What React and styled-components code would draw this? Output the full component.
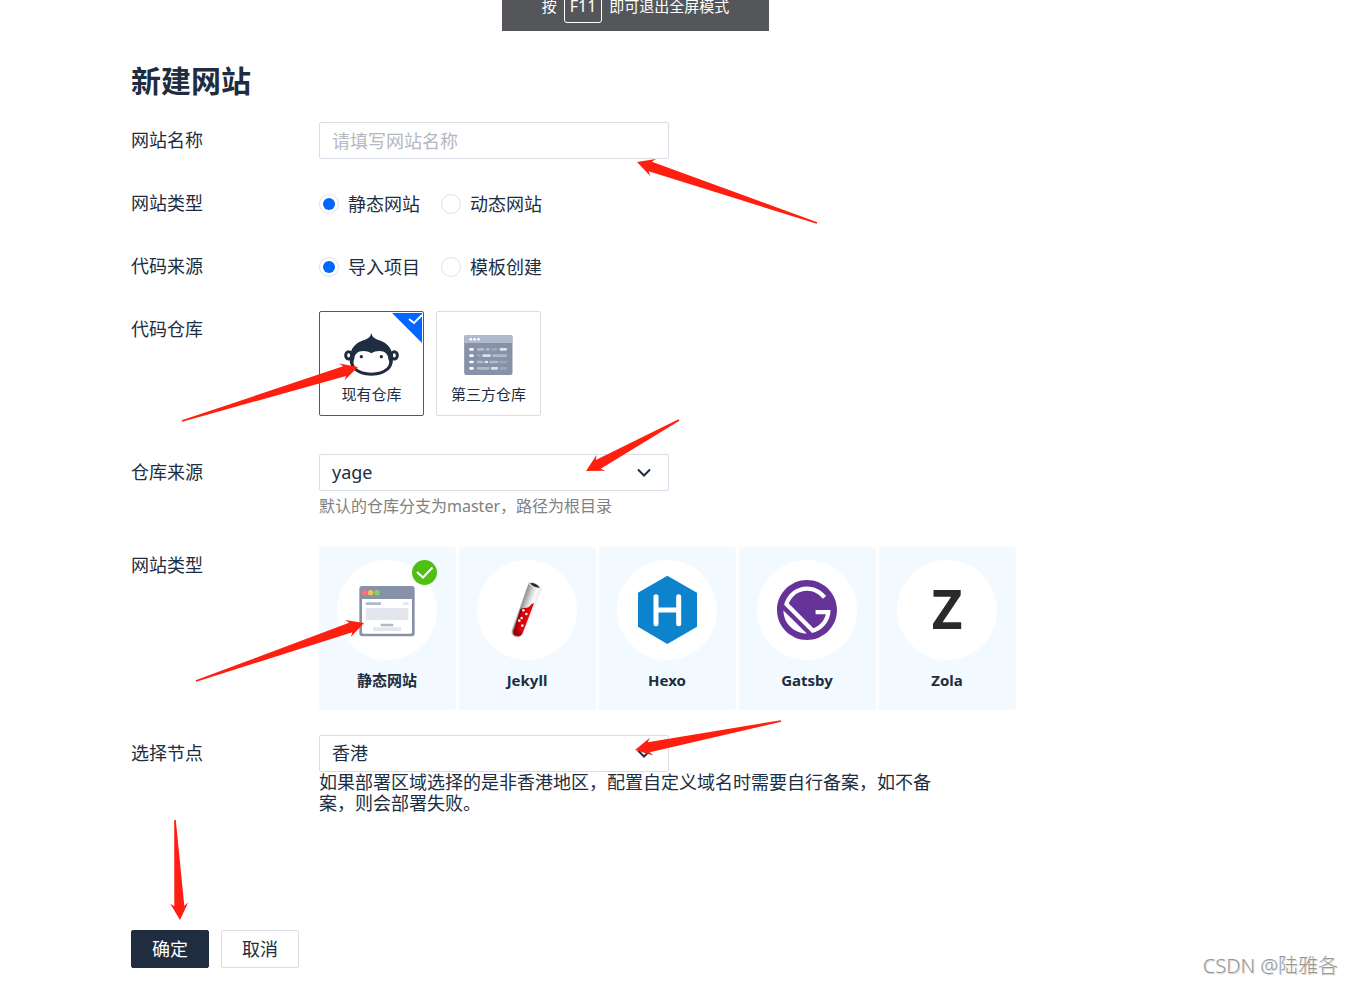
import React, { useState } from 'react';
import styled, { createGlobalStyle } from 'styled-components';
import { SiGatsby } from 'react-icons/si';

const ink = '#202d40';
const line = '#d8dde6';
const blue = '#0066ff';
const red = '#ff1f10';

const GlobalStyle = createGlobalStyle`
  * { box-sizing: border-box; }
  body {
    margin: 0;
    background: #fff;
    color: ${ink};
    font: 400 18px/21px "Noto Sans", "Noto Sans CJK SC", sans-serif;
  }
  button, input, select { font: inherit; color: inherit; }
`;

const Page = styled.main`
  position: relative;
  min-height: 100vh;
  padding: 60px 24px 16px 131px;
`;

const Toast = styled.div`
  position: absolute;
  top: 0;
  left: 502px;
  display: flex;
  justify-content: center;
  align-items: flex-end;
  gap: 7px;
  width: 267px;
  height: 31px;
  padding-bottom: 8px;
  overflow: hidden;
  background: #54565a;
  color: #fff;
  font-size: 15px;
  font-weight: 400;
  line-height: 34px;
`;

const Key = styled.kbd`
  height: 34px;
  padding: 0 5px;
  border: 1px solid #fff;
  border-radius: 3px;
  font: inherit;
  font-size: 16px;
  line-height: 32px;
`;

const Title = styled.h1`
  margin: 0 0 20px;
  font-size: 30px;
  font-weight: 700;
  line-height: 42px;
`;

const Form = styled.form`
  display: flex;
  flex-direction: column;
  gap: 25px;
`;

const Row = styled.div`
  display: grid;
  grid-template-columns: 188px minmax(0, 1fr);
  min-height: 38px;
`;

const RowLabel = styled.label`
  line-height: 36px;
`;

const Field = styled.div`
  position: relative;
  padding-bottom: ${(p) => p.$space || 0}px;
`;

const TextInput = styled.input`
  display: block;
  width: 100%;
  max-width: 350px;
  height: 37px;
  padding: 0 12px;
  border: 1px solid ${line};
  border-radius: 2px;
  outline: none;
  &::placeholder { color: #b3b8c1; opacity: 1; }
`;

const SelectBox = styled.div`
  position: relative;
  max-width: 350px;
  svg {
    position: absolute;
    top: 14px;
    right: 18px;
    pointer-events: none;
  }
`;

const SelectInput = styled.select`
  display: block;
  width: 100%;
  height: 37px;
  padding: 0 40px 0 12px;
  border: 1px solid ${line};
  border-radius: 2px;
  background: #fff;
  appearance: none;
  outline: none;
`;

const RadioGroup = styled.div`
  display: flex;
  align-items: center;
  gap: 21px;
  height: 38px;
`;

const RadioLabel = styled.label`
  display: flex;
  align-items: center;
  gap: 9px;
`;

const RadioInput = styled.input`
  appearance: none;
  display: grid;
  place-items: center;
  width: 20px;
  height: 20px;
  margin: 0;
  border: 1px solid #dde1e9;
  border-radius: 50%;
  &:checked::before {
    content: "";
    width: 12px;
    height: 12px;
    border-radius: 50%;
    background: ${blue};
  }
`;

const Cards = styled.div`
  display: flex;
  flex-wrap: wrap;
  gap: 12px;
`;

const RepoCard = styled.button`
  position: relative;
  display: flex;
  flex-direction: column;
  align-items: center;
  gap: 8px;
  width: 105px;
  height: 105px;
  padding: 21px 0 0;
  border: 1px solid ${(p) => (p.$active ? blue : line)};
  border-radius: 2px;
  background: #fff;
  font-size: 15px;
  line-height: 20px;
`;

const CardIcon = styled.span`
  display: grid;
  place-items: center;
  height: 43px;
`;

const Corner = styled.svg`
  position: absolute;
  top: 1px;
  right: 1px;
`;

const Hint = styled.p`
  margin: 0;
  color: #808080;
  font-size: 16px;
  line-height: 31px;
`;

const Note = styled.p`
  max-width: 620px;
  margin: 0;
`;

const Tiles = styled.div`
  display: flex;
  flex-wrap: wrap;
  gap: 3px;
`;

const Tile = styled.button`
  display: flex;
  flex-direction: column;
  align-items: center;
  gap: 10px;
  width: 137px;
  height: 163px;
  padding: 13px 1px 0 0;
  border: 0;
  border-radius: 2px;
  background: #f2faff;
  font-size: 15px;
  font-weight: 700;
  line-height: 20px;
`;

const Disc = styled.span`
  position: relative;
  display: grid;
  place-items: center;
  width: 100px;
  height: 100px;
  border-radius: 50%;
  background: #fff;
`;

const Badge = styled.svg`
  position: absolute;
  top: 0;
  right: 0;
`;

const Actions = styled.div`
  position: relative;
  display: flex;
  gap: 12px;
  margin-top: 91px;
`;

const Button = styled.button`
  width: 78px;
  height: 38px;
  padding: 0;
  border: 1px solid ${(p) => (p.$primary ? ink : line)};
  border-radius: 2px;
  background: ${(p) => (p.$primary ? ink : '#fff')};
  color: ${(p) => (p.$primary ? '#fff' : ink)};
`;

const Watermark = styled.div`
  position: absolute;
  right: 14px;
  bottom: 6px;
  color: #969696;
  font-size: 20px;
  font-weight: 300;
  line-height: 24px;
  text-shadow: -1px -1px 0 #fff, 1px 1px 1px #ccc;
`;

const ArrowSvg = styled.svg`
  position: absolute;
  z-index: 2;
  top: ${(p) => p.$y}px;
  left: ${(p) => p.$x}px;
  overflow: visible;
  pointer-events: none;
`;

/* Tapered pointer: its tip sits at (x, y), its tail at (x + dx, y + dy). */
function Arrow({ x, y, dx, dy }) {
  const length = Math.hypot(dx, dy);
  const angle = (Math.atan2(dy, dx) * 180) / Math.PI;
  return (
    <ArrowSvg $x={x} $y={y} width="1" height="1" aria-hidden="true">
      <polygon
        fill={red}
        transform={`rotate(${angle})`}
        points={`0,0 17,-9 14,-5 ${length},-0.8 ${length},0.8 14,5 17,9`}
      />
    </ArrowSvg>
  );
}

function Select({ id, options }) {
  return (
    <SelectBox>
      <SelectInput id={id}>
        {options.map((o) => <option key={o}>{o}</option>)}
      </SelectInput>
      <svg width="14" height="10" viewBox="0 0 14 10" fill="none" stroke={ink} strokeWidth="2">
        <path d="M1 1.5 7 7.5 13 1.5" />
      </svg>
    </SelectBox>
  );
}

function Radios({ name, label, options }) {
  return (
    <RadioGroup role="radiogroup" aria-label={label}>
      {options.map((o, i) => (
        <RadioLabel key={o}>
          <RadioInput type="radio" name={name} defaultChecked={i === 0} />
          {o}
        </RadioLabel>
      ))}
    </RadioGroup>
  );
}

const Monkey = () => (
  <svg width="55" height="43" viewBox="132 100 165 129">
    <g fill="#fff" stroke={ink} strokeWidth="9">
      <ellipse cx="146" cy="167" rx="9" ry="11" />
      <ellipse cx="283" cy="167" rx="9" ry="11" />
    </g>
    <path fill={ink} d="M214 100c2 11 9 17 24 22 20 7 32 19 37 34 6 19 6 38-6 52-12 13-32 20-55 20s-43-7-55-20c-12-14-12-33-6-52 5-15 17-27 37-34 15-5 22-11 24-22z" />
    <path fill="#fff" d="M214 161c7-5 15-7 24-7 17 0 27 10 27 24 5 9 3 19-6 27-10 9-26 14-45 14s-35-5-45-14c-9-8-11-18-6-27 0-14 10-24 27-24 9 0 17 2 24 7z" />
    <circle cx="184" cy="171" r="5" fill={ink} />
    <circle cx="244" cy="171" r="5" fill={ink} />
  </svg>
);

const CodeWindow = () => (
  <svg width="49" height="40" viewBox="493 105 146 120">
    <rect x="493" y="105" width="145" height="120" rx="6" fill="#8792a8" />
    <path d="M493 129v-18a6 6 0 0 1 6-6h133a6 6 0 0 1 6 6v18z" fill="#afbacd" />
    <g fill="#fff">
      <circle cx="513" cy="118" r="4" /><circle cx="524" cy="118" r="4" /><circle cx="536" cy="118" r="4" />
    </g>
    <g strokeWidth="8" strokeLinecap="round">
      <path stroke="#fff" d="M512 148h6M512 167h6M512 186h6M512 205h6" />
      <path stroke="#b0bacb" d="M535 148h15M562 148h4M581 167h37M535 186h12M572 186h20M535 205h31" />
      <path stroke="#9ca6b8" d="M577 148h12M535 167h4M602 186h16M602 205h16" />
      <path stroke="#dde2ea" d="M603 148h15M551 167h18M558 186h3M577 205h14" />
    </g>
  </svg>
);

const StaticSite = () => (
  <svg width="100" height="100" viewBox="0 0 300 300">
    <rect x="67" y="78" width="166" height="151" rx="9" fill="#8792a8" />
    <path fill="#fff" d="M75 117h150v100a4 4 0 0 1-4 4H79a4 4 0 0 1-4-4z" />
    <circle cx="83" cy="98" r="8" fill="#ff6f7c" />
    <circle cx="101" cy="98" r="8" fill="#f2c24d" />
    <circle cx="120" cy="98" r="8" fill="#83d654" />
    <path fill="#adbacd" d="M86 127h46v8H86zM131 191h38v8h-38z" />
    <path fill="#e3e7ed" d="M198 127h17v8h-17zM86 144h128v36H86zM108 202h84v11h-84z" />
  </svg>
);

const TestTube = () => (
  <svg width="100" height="100" viewBox="0 0 300 300">
    <defs>
      <linearGradient id="glass" gradientUnits="userSpaceOnUse" x1="134" y1="130" x2="172" y2="144">
        <stop offset="0" stopColor="#8f8f8f" />
        <stop offset="0.4" stopColor="#d2d2d2" />
        <stop offset="0.7" stopColor="#fafafa" />
        <stop offset="1" stopColor="#ececec" />
      </linearGradient>
      <linearGradient id="liquid" gradientUnits="userSpaceOnUse" x1="124" y1="170" x2="156" y2="182">
        <stop offset="0" stopColor="#a00008" />
        <stop offset="0.45" stopColor="#d8000c" />
        <stop offset="1" stopColor="#ea0a14" />
      </linearGradient>
    </defs>
    <path fill="url(#glass)" stroke="#ddd" strokeWidth="1" d="M155 69 106 207c-5 14 0 22 12 25 12 2 18-3 22-12L194 86c3-9-37-25-39-17z" />
    <path fill="url(#liquid)" d="M130 147c10-5 22 0 28-8 4-6 8-8 13-9l-33 87c-4 10-10 14-19 12-10-2-13-9-9-19z" />
    <path fill="#8a0007" opacity="0.6" d="M110 208c8-3 20 0 26 10-4 8-9 12-16 10-9-2-13-9-10-20z" />
    <ellipse cx="174" cy="76" rx="19" ry="7" transform="rotate(22 174 76)" fill="#efefef" />
    <path fill="#2b2b2b" d="M159 70c9-3 23 3 29 13-10 1-22-3-29-13z" />
    <g fill="#ffe5e5">
      <circle cx="139" cy="151" r="4" /><circle cx="148" cy="162" r="4" />
      <circle cx="134" cy="174" r="4" /><circle cx="127" cy="182" r="4" />
      <circle cx="136" cy="197" r="4" />
    </g>
  </svg>
);

const HexoLogo = () => (
  <svg width="100" height="100" viewBox="0 0 300 300">
    <path fill="#0e83cd" d="M151 47 240 98v102l-89 52-88-52V98z" />
    <path fill="none" stroke="#fff" strokeWidth="15" strokeLinecap="round" d="M117 110v81M185 110v81M117 150h68" />
  </svg>
);

const ZolaLogo = () => (
  <svg width="100" height="100" viewBox="0 0 100 100">
    <text x="50" y="69" textAnchor="middle" fill="#2a2a2a" fontFamily="Open Sans, sans-serif" fontWeight="700" fontSize="53">Z</text>
  </svg>
);

const siteTypes = [
  ['静态网站', <StaticSite />],
  ['Jekyll', <TestTube />],
  ['Hexo', <HexoLogo />],
  ['Gatsby', <SiGatsby size={60} color="#663399" />],
  ['Zola', <ZolaLogo />],
];

const repos = [
  ['现有仓库', <Monkey />],
  ['第三方仓库', <CodeWindow />],
];

export default function App() {
  const [repo, setRepo] = useState(0);
  const [site, setSite] = useState(0);
  return (
    <Page>
      <GlobalStyle />
      <Toast>
        <span>按</span>
        <Key>F11</Key>
        <span>即可退出全屏模式</span>
      </Toast>
      <Title>新建网站</Title>
      <Form onSubmit={(e) => e.preventDefault()}>
        <Row>
          <RowLabel htmlFor="site-name">网站名称</RowLabel>
          <Field>
            <TextInput id="site-name" type="text" placeholder="请填写网站名称" />
            <Arrow x={318} y={40} dx={180} dy={61} />
          </Field>
        </Row>
        <Row>
          <RowLabel as="span">网站类型</RowLabel>
          <Radios name="kind" label="网站类型" options={['静态网站', '动态网站']} />
        </Row>
        <Row>
          <RowLabel as="span">代码来源</RowLabel>
          <Radios name="source" label="代码来源" options={['导入项目', '模板创建']} />
        </Row>
        <Row>
          <RowLabel as="span">代码仓库</RowLabel>
          <Field $space={13}>
            <Cards>
              {repos.map(([name, icon], i) => (
                <RepoCard key={name} type="button" $active={repo === i} aria-pressed={repo === i} onClick={() => setRepo(i)}>
                  <CardIcon>{icon}</CardIcon>
                  {name}
                  {repo === i && (
                    <Corner width="30" height="30" viewBox="0 0 30 30">
                      <path fill={blue} d="M0 0h30v30z" />
                      <path fill="none" stroke="#fff" strokeWidth="2" d="M17 6l5 4 8-8" />
                    </Corner>
                  )}
                </RepoCard>
              ))}
            </Cards>
            <Arrow x={39} y={56} dx={-176} dy={54} />
          </Field>
        </Row>
        <Row>
          <RowLabel htmlFor="repo-source">仓库来源</RowLabel>
          <Field>
            <Select id="repo-source" options={['yage']} />
            <Hint>默认的仓库分支为master，路径为根目录</Hint>
            <Arrow x={267} y={17} dx={93} dy={-51} />
          </Field>
        </Row>
        <Row>
          <RowLabel as="span">网站类型</RowLabel>
          <Field>
            <Tiles>
              {siteTypes.map(([name, icon], i) => (
                <Tile key={name} type="button" aria-pressed={site === i} onClick={() => setSite(i)}>
                  <Disc>
                    {icon}
                    {site === i && (
                      <Badge width="25" height="25" viewBox="0 0 25 25">
                        <circle cx="12.5" cy="12.5" r="12.5" fill="#4fc010" />
                        <path fill="none" stroke="#fff" strokeWidth="2" d="M5 12l6 5.500 9.500-10" />
                      </Badge>
                    )}
                  </Disc>
                  {name}
                </Tile>
              ))}
            </Tiles>
            <Arrow x={45} y={76} dx={-168} dy={58} />
          </Field>
        </Row>
        <Row>
          <RowLabel htmlFor="node">选择节点</RowLabel>
          <Field>
            <Select id="node" options={['香港']} />
            <Note>如果部署区域选择的是非香港地区，配置自定义域名时需要自行备案，如不备案，则会部署失败。</Note>
            <Arrow x={316} y={15} dx={146} dy={-29} />
          </Field>
        </Row>
        <Actions>
          <Button type="submit" $primary>确定</Button>
          <Button type="button">取消</Button>
          <Arrow x={49} y={-10} dx={-5} dy={-100} />
        </Actions>
      </Form>
      <Watermark>CSDN @陆雅各</Watermark>
    </Page>
  );
}
